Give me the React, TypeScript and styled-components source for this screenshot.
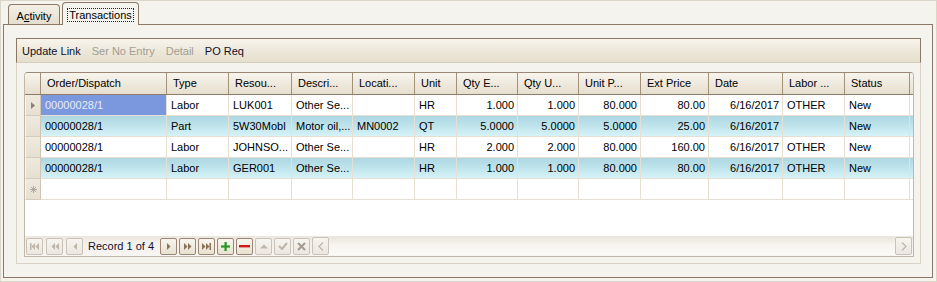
import styled, { createGlobalStyle } from "styled-components";

const GlobalStyle = createGlobalStyle`
  html, body {
    margin: 0;
    padding: 0;
    background: #f5f3ee;
  }
  body {
    font-family: "Liberation Sans", Arial, sans-serif;
    font-size: 11px;
    color: #000;
  }
`;

const COLS = "16px 126px 62px 63px 61px 62px 42px 61px 61px 62px 68px 74px 62px 65px";
const BROWN = "#8b7866";

const Window = styled.div`
  width: 937px;
  height: 282px;
  box-sizing: border-box;
  border: 1px solid #dcd6ca;
  background: #f5f3ee;
  padding: 0 3px 3px 2px;
  display: flex;
  flex-direction: column;
`;

const TabStrip = styled.div`
  height: 23px;
  display: flex;
  align-items: flex-end;
  padding-left: 5px;
  gap: 2px;
`;

const Tab = styled.div<{ $active?: boolean }>`
  position: relative;
  z-index: 1;
  box-sizing: border-box;
  display: flex;
  align-items: center;
  justify-content: center;
  width: ${(p) => (p.$active ? "77px" : "52px")};
  height: ${(p) => (p.$active ? "23px" : "20px")};
  margin-bottom: ${(p) => (p.$active ? "-1px" : "0")};
  padding-top: ${(p) => (p.$active ? "1px" : "2px")};
  border: 1px solid ${BROWN};
  border-bottom: none;
  border-radius: 4px 4px 0 0;
  background: ${(p) =>
    p.$active ? "#f5f3ee" : "linear-gradient(#f4f0e6, #e5dece)"};
`;

const TabLabel = styled.span<{ $focused?: boolean }>`
  padding: 0 1px;
  line-height: 12px;
  outline: ${(p) => (p.$focused ? "1px dotted #222" : "none")};
  u {
    text-decoration: underline;
  }
`;

const Panel = styled.div`
  height: 254px;
  box-sizing: border-box;
  border: 1px solid ${BROWN};
  padding: 13px 11px 13px 12px;
  display: flex;
  flex-direction: column;
`;

const Toolbar = styled.div`
  height: 25px;
  box-sizing: border-box;
  border: 1px solid ${BROWN};
  border-bottom-color: #d6cebf;
  background: linear-gradient(#f7f4ec, #ece6d8 60%, #e6dfcd);
  display: flex;
  align-items: center;
  gap: 11px;
  padding: 1px 0 0 5px;
`;

const ToolItem = styled.span<{ $disabled?: boolean }>`
  color: ${(p) => (p.$disabled ? "#a39d94" : "#10102a")};
`;

const Frame = styled.div`
  height: 201px;
  box-sizing: border-box;
  border: 1px solid #d9d2c5;
  border-top: none;
  padding: 9px 6px 6px 7px;
`;

const Grid = styled.div`
  height: 185px;
  box-sizing: border-box;
  border: 1px solid #c2b8aa;
  border-top-color: #9a8774;
  border-radius: 4px 4px 0 0;
  background: #fff;
  overflow: hidden;
  display: flex;
  flex-direction: column;
`;

const HeaderRow = styled.div`
  display: grid;
  grid-template-columns: ${COLS};
  height: 22px;
  box-sizing: border-box;
  border-bottom: 1px solid #8f7b68;
  background: linear-gradient(#f8f5ee, #eee8dc 55%, #e6dfcf);
`;

const HeaderCell = styled.div`
  box-sizing: border-box;
  border-right: 1px solid #a39078;
  padding-left: 6px;
  line-height: 21px;
  white-space: nowrap;
  overflow: hidden;
`;

const Row = styled.div<{ $alt?: boolean }>`
  display: grid;
  grid-template-columns: ${COLS};
  height: 21px;
  box-sizing: border-box;
  border-bottom: 1px solid #e6e0d2;
  background: ${(p) =>
    p.$alt ? "linear-gradient(#aed7e2, #bfe4ec 50%, #d6f3f8)" : "#fff"};
`;

const Indicator = styled.div`
  box-sizing: border-box;
  display: flex;
  align-items: center;
  justify-content: center;
  background: linear-gradient(#efeade, #e6e0d2);
  border-right: 1px solid #cfc5b5;
  border-left: 1px solid #f8f6f0;
  margin-bottom: -1px;
  border-bottom: 1px solid #d6ccbd;
`;

const Cell = styled.div<{ $right?: boolean; $selected?: boolean }>`
  box-sizing: border-box;
  border-right: 1px solid #e6e0d2;
  padding: 0 ${(p) => (p.$right ? "3px" : "3px")} 0 4px;
  line-height: 20px;
  white-space: nowrap;
  overflow: hidden;
  text-align: ${(p) => (p.$right ? "right" : "left")};
  background: ${(p) => (p.$selected ? "#7b97dd" : "transparent")};
  color: ${(p) => (p.$selected ? "#e6ecfa" : "#000")};
`;

const Blank = styled.div`
  flex: 1;
`;

const NavBar = styled.div`
  height: 20px;
  display: flex;
  align-items: center;
  padding-left: 1px;
  background: linear-gradient(#ebe7de, #f3f0ea 30%, #f8f6f2);
`;

const NavGroup = styled.div<{ $gap: number }>`
  display: flex;
  gap: ${(p) => p.$gap}px;
`;

const NavButton = styled.div<{ $enabled?: boolean }>`
  width: 17px;
  height: 17px;
  box-sizing: border-box;
  display: flex;
  align-items: center;
  justify-content: center;
  border: 1px solid ${(p) => (p.$enabled ? "#9a8672" : "#cac2b6")};
  border-radius: 2px;
  background: ${(p) =>
    p.$enabled
      ? "linear-gradient(#f8f5ee, #e8e1d2)"
      : "linear-gradient(#f6f4ef, #ece8e0)"};
  color: ${(p) => (p.$enabled ? "#8a725c" : "#bdb5aa")};
`;

const RecordText = styled.span`
  margin: 0 6px 0 5px;
  color: #101030;
`;

const ScrollBar = styled.div`
  flex: 1;
  margin: 0 1px 0 2px;
  height: 18px;
  display: flex;
  justify-content: space-between;
  background: linear-gradient(#e9e5dc, #f6f4ef 40%, #fbfaf7);
`;

const ScrollArrow = styled.div`
  width: 17px;
  height: 18px;
  box-sizing: border-box;
  display: flex;
  align-items: center;
  justify-content: center;
  border: 1px solid #cac2b6;
  border-radius: 2px;
  background: linear-gradient(#f6f4ef, #ece8e0);
  color: #bdb5aa;
`;

type Icon = "first" | "prevPage" | "prev" | "next" | "nextPage" | "last" | "plus" | "minus" | "up" | "check" | "cancel";

function NavIcon({ kind }: { kind: Icon }) {
  switch (kind) {
    case "first":
      return (
        <svg width="9" height="7" viewBox="0 0 9 7" fill="currentColor">
          <rect x="0" y="0" width="1.5" height="7" />
          <polygon points="5,0 1.5,3.5 5,7" />
          <polygon points="9,0 5.5,3.5 9,7" />
        </svg>
      );
    case "prevPage":
      return (
        <svg width="8" height="7" viewBox="0 0 8 7" fill="currentColor">
          <polygon points="4,0 0.5,3.5 4,7" />
          <polygon points="8,0 4.5,3.5 8,7" />
        </svg>
      );
    case "prev":
      return (
        <svg width="4" height="7" viewBox="0 0 4 7" fill="currentColor">
          <polygon points="4,0 0.5,3.5 4,7" />
        </svg>
      );
    case "next":
      return (
        <svg width="4" height="7" viewBox="0 0 4 7" fill="currentColor">
          <polygon points="0,0 3.5,3.5 0,7" />
        </svg>
      );
    case "nextPage":
      return (
        <svg width="8" height="7" viewBox="0 0 8 7" fill="currentColor">
          <polygon points="0,0 3.5,3.5 0,7" />
          <polygon points="4,0 7.5,3.5 4,7" />
        </svg>
      );
    case "last":
      return (
        <svg width="9" height="7" viewBox="0 0 9 7" fill="currentColor">
          <polygon points="0,0 3.5,3.5 0,7" />
          <polygon points="4,0 7.5,3.5 4,7" />
          <rect x="7.5" y="0" width="1.5" height="7" />
        </svg>
      );
    case "plus":
      return (
        <svg width="9" height="9" viewBox="0 0 9 9" fill="#239a23">
          <rect x="3.5" y="0" width="2.2" height="9" />
          <rect x="0" y="3.4" width="9" height="2.2" />
        </svg>
      );
    case "minus":
      return (
        <svg width="11" height="3" viewBox="0 0 11 3" fill="#d01a1a">
          <rect x="0" y="0" width="11" height="2.4" />
        </svg>
      );
    case "up":
      return (
        <svg width="8" height="5" viewBox="0 0 8 5" fill="currentColor">
          <polygon points="0,4.5 4,0.5 8,4.5" />
        </svg>
      );
    case "check":
      return (
        <svg width="10" height="8" viewBox="0 0 10 8">
          <polyline points="1,4 4,7 9,1" fill="none" stroke="currentColor" strokeWidth="2" />
        </svg>
      );
    case "cancel":
      return (
        <svg width="9" height="9" viewBox="0 0 9 9">
          <path d="M1 1 L8 8 M8 1 L1 8" stroke="#a39b92" strokeWidth="2" />
        </svg>
      );
  }
}

const Chevron = ({ dir }: { dir: "left" | "right" }) => (
  <svg width="6" height="9" viewBox="0 0 6 9">
    <polyline
      points={dir === "left" ? "5,0.5 1,4.5 5,8.5" : "1,0.5 5,4.5 1,8.5"}
      fill="none"
      stroke="currentColor"
      strokeWidth="1.2"
    />
  </svg>
);

const RowMarker = () => (
  <svg width="4" height="7" viewBox="0 0 4 7" fill="#8a8276">
    <polygon points="0,0 4,3.5 0,7" />
  </svg>
);

const NewRowMarker = () => (
  <svg width="7" height="7" viewBox="0 0 7 7" stroke="#b2aa9e" strokeWidth="1">
    <path d="M3.5 0 V7 M0 3.5 H7 M1 1 L6 6 M6 1 L1 6" />
  </svg>
);

const headers = [
  "Order/Dispatch",
  "Type",
  "Resou...",
  "Descri...",
  "Locati...",
  "Unit",
  "Qty E...",
  "Qty U...",
  "Unit P...",
  "Ext Price",
  "Date",
  "Labor ...",
  "Status",
];

const rightAligned = [6, 7, 8, 9, 10];

const rows = [
  ["00000028/1", "Labor", "LUK001", "Other Se...", "", "HR", "1.000", "1.000", "80.000", "80.00", "6/16/2017", "OTHER", "New"],
  ["00000028/1", "Part", "5W30Mobl", "Motor oil,...", "MN0002", "QT", "5.0000", "5.0000", "5.0000", "25.00", "6/16/2017", "", "New"],
  ["00000028/1", "Labor", "JOHNSO...", "Other Se...", "", "HR", "2.000", "2.000", "80.000", "160.00", "6/16/2017", "OTHER", "New"],
  ["00000028/1", "Labor", "GER001", "Other Se...", "", "HR", "1.000", "1.000", "80.000", "80.00", "6/16/2017", "OTHER", "New"],
];

export default function App() {
  return (
    <>
      <GlobalStyle />
      <Window>
        <TabStrip>
          <Tab>
            <TabLabel>
              A<u>c</u>tivity
            </TabLabel>
          </Tab>
          <Tab $active>
            <TabLabel $focused>Transactions</TabLabel>
          </Tab>
        </TabStrip>
        <Panel>
          <Toolbar>
            <ToolItem>Update Link</ToolItem>
            <ToolItem $disabled>Ser No Entry</ToolItem>
            <ToolItem $disabled>Detail</ToolItem>
            <ToolItem>PO Req</ToolItem>
          </Toolbar>
          <Frame>
            <Grid>
              <HeaderRow>
                <HeaderCell />
                {headers.map((h) => (
                  <HeaderCell key={h}>{h}</HeaderCell>
                ))}
              </HeaderRow>
              {rows.map((r, i) => (
                <Row key={i} $alt={i % 2 === 1}>
                  <Indicator>{i === 0 && <RowMarker />}</Indicator>
                  {r.map((v, j) => (
                    <Cell
                      key={j}
                      $right={rightAligned.includes(j)}
                      $selected={i === 0 && j === 0}
                    >
                      {v}
                    </Cell>
                  ))}
                </Row>
              ))}
              <Row>
                <Indicator>
                  <NewRowMarker />
                </Indicator>
                {headers.map((h) => (
                  <Cell key={h} />
                ))}
              </Row>
              <Blank />
              <NavBar>
                <NavGroup $gap={3}>
                  <NavButton>
                    <NavIcon kind="first" />
                  </NavButton>
                  <NavButton>
                    <NavIcon kind="prevPage" />
                  </NavButton>
                  <NavButton>
                    <NavIcon kind="prev" />
                  </NavButton>
                </NavGroup>
                <RecordText>Record 1 of 4</RecordText>
                <NavGroup $gap={2}>
                  <NavButton $enabled>
                    <NavIcon kind="next" />
                  </NavButton>
                  <NavButton $enabled>
                    <NavIcon kind="nextPage" />
                  </NavButton>
                  <NavButton $enabled>
                    <NavIcon kind="last" />
                  </NavButton>
                  <NavButton $enabled>
                    <NavIcon kind="plus" />
                  </NavButton>
                  <NavButton $enabled>
                    <NavIcon kind="minus" />
                  </NavButton>
                  <NavButton>
                    <NavIcon kind="up" />
                  </NavButton>
                  <NavButton>
                    <NavIcon kind="check" />
                  </NavButton>
                  <NavButton>
                    <NavIcon kind="cancel" />
                  </NavButton>
                </NavGroup>
                <ScrollBar>
                  <ScrollArrow>
                    <Chevron dir="left" />
                  </ScrollArrow>
                  <ScrollArrow>
                    <Chevron dir="right" />
                  </ScrollArrow>
                </ScrollBar>
              </NavBar>
            </Grid>
          </Frame>
        </Panel>
      </Window>
    </>
  );
}
